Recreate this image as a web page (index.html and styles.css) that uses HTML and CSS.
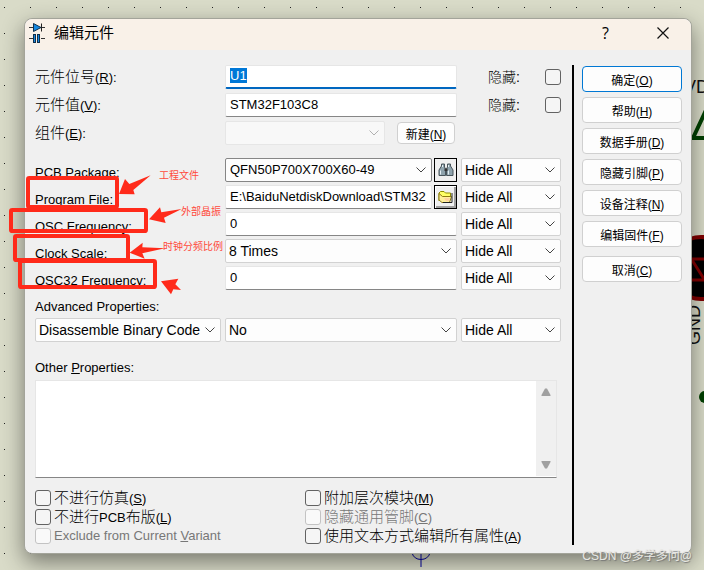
FILE: index.html
```html
<!DOCTYPE html>
<html lang="zh-CN">
<head>
    <meta charset="UTF-8">
    <meta name="viewport" content="width=device-width, initial-scale=1.0">
    <title>编辑元件</title>
    <link rel="stylesheet" href="styles.css">
</head>
<body>
    <!-- schematic parts that stick out behind the dialog -->
    <svg class="schematic schematic-right" viewBox="0 0 24 420" aria-hidden="true">
        <text x="4" y="93" class="net-name">VD</text>
        <path d="M13 138L28 106M12 138H28" fill="none" stroke="#004000" stroke-width="4"/>
        <circle cx="21" cy="268" r="31" fill="#000" stroke="#800000" stroke-width="4"/>
        <path d="M0 259H24M0 280H24M12 260L24 279" stroke="#800000" stroke-width="3"/>
        <text class="net-name" transform="translate(20 345) rotate(-90)">GND</text>
        <circle cx="25" cy="397" r="6" fill="#004000"/>
    </svg>
    <svg class="schematic schematic-bottom" viewBox="0 0 24 24" aria-hidden="true">
        <path d="M12 0V24M3 10A9.500 9.500 0 0 0 21 10" fill="none" stroke="#0000a0" stroke-width="1"/>
    </svg>

    <div class="dialog" role="dialog" aria-labelledby="dialogTitle">
        <div class="titlebar">
            <svg class="app-icon" width="16" height="22" viewBox="0 0 16 22" aria-hidden="true">
                <path d="M0 5.500H16M0 16.500H4M12 16.500H16" stroke="#333" stroke-width="1"/>
                <path d="M4.500 1.500L12 5.500L4.500 9.500Z" fill="#1688e0" stroke="#12304a"/>
                <path d="M12.500 1.500V9.500" stroke="#222" stroke-width="1"/>
                <rect x="4.500" y="12.500" width="2" height="8" fill="#1688e0" stroke="#12304a"/>
                <rect x="8.500" y="12.500" width="2" height="8" fill="#1688e0" stroke="#12304a"/>
            </svg>
            <h1 id="dialogTitle">编辑元件</h1>
            <button type="button" class="title-btn" aria-label="Help">?</button>
            <button type="button" class="title-btn" aria-label="Close">
                <svg width="12" height="12" viewBox="0 0 12 12"><path d="M0.500 0.500L11.500 11.500M11.500 0.500L0.500 11.500" stroke="#111" stroke-width="1.200"/></svg>
            </button>
        </div>

        <form class="dialog-body">
            <div class="main">
                <div class="part-rows">
                    <label class="cn" for="partRef">元件位号<span class="key">(<u>R</u>):</span></label>
                    <input type="text" id="partRef" class="field focused" value="U1">
                    <label class="cn hide-label" for="hideRef">隐藏:</label>
                    <input type="checkbox" id="hideRef">

                    <label class="cn" for="partValue">元件值<span class="key">(<u>V</u>):</span></label>
                    <input type="text" id="partValue" class="field" value="STM32F103C8">
                    <label class="cn hide-label" for="hideValue">隐藏:</label>
                    <input type="checkbox" id="hideValue">

                    <label class="cn" for="element">组件<span class="key">(<u>E</u>):</span></label>
                    <div class="element-group">
                        <select id="element" class="field" disabled><option></option></select>
                        <button type="button" class="btn">新建(<u>N</u>)</button>
                    </div>
                </div>

                <div class="props">
                    <label for="pcbPackage">PCB Package:</label>
                    <div class="with-tool">
                        <select id="pcbPackage" class="field combo"><option>QFN50P700X700X60-49</option></select>
                        <button type="button" class="tool-btn" aria-label="Browse packages">
                            <svg width="16" height="14" viewBox="0 0 16 14">
                                <path d="M3.500 1H6.500V4L7.500 6V12.500H1V7L3.500 3ZM9.500 1H12.500V3L15 7V12.500H8.500V6L9.500 4Z" fill="#8fa3ad" stroke="#48545b"/>
                                <path d="M2.500 7.500V11.500M10.500 7.500V11.500M4.500 2V4M10.500 2V4" stroke="#e6f0f4"/>
                                <path d="M6.500 5.500H9.500V8H6.500Z" fill="#333"/>
                            </svg>
                        </button>
                    </div>
                    <select class="field" aria-label="PCB Package visibility"><option>Hide All</option></select>

                    <label for="programFile">Program File:</label>
                    <div class="with-tool">
                        <input type="text" id="programFile" class="field" value="E:\BaiduNetdiskDownload\STM32">
                        <button type="button" class="tool-btn raised" aria-label="Open file">
                            <svg width="16" height="14" viewBox="0 0 16 14">
                                <path d="M1 11V3L2.500 1.500H6L7.500 3H12.500V6" fill="#ffff66" stroke="#8c8c00"/>
                                <path d="M1 3.500L4.500 6.500H13.500L11.500 12.500H4L1 10Z" fill="#ffef9a" stroke="#8c7a10"/>
                                <path d="M6 8H12L11 11H8Z" fill="#ffd0a0"/>
                                <path d="M14 3V12.500H5" fill="none" stroke="#222"/>
                            </svg>
                        </button>
                    </div>
                    <select class="field" aria-label="Program File visibility"><option>Hide All</option></select>

                    <label for="oscFreq">OSC Frequency:</label>
                    <input type="text" id="oscFreq" class="field" value="0">
                    <select class="field" aria-label="OSC Frequency visibility"><option>Hide All</option></select>

                    <label for="clockScale">Clock Scale:</label>
                    <select id="clockScale" class="field"><option>8 Times</option></select>
                    <select class="field" aria-label="Clock Scale visibility"><option>Hide All</option></select>

                    <label for="osc32Freq">OSC32 Frequency:</label>
                    <input type="text" id="osc32Freq" class="field" value="0">
                    <select class="field" aria-label="OSC32 Frequency visibility"><option>Hide All</option></select>
                </div>

                <label class="section-label" for="advName">Advanced Properties:</label>
                <div class="props">
                    <select id="advName" class="field"><option>Disassemble Binary Code</option></select>
                    <select class="field" aria-label="Advanced property value"><option>No</option></select>
                    <select class="field" aria-label="Advanced property visibility"><option>Hide All</option></select>
                </div>

                <label class="section-label other-label" for="otherProps">Other <u>P</u>roperties:</label>
                <div class="other-box">
                    <textarea id="otherProps"></textarea>
                    <div class="scroll-track" aria-hidden="true">
                        <svg width="10" height="8" viewBox="0 0 10 8"><path d="M4 0.500H6L9.500 7V8H0.500V7Z" fill="#a0a0a0"/></svg>
                        <svg width="10" height="8" viewBox="0 0 10 8"><path d="M4 7.500H6L9.500 1V0H0.500V1Z" fill="#a0a0a0"/></svg>
                    </div>
                </div>

                <div class="checks">
                    <label class="cn"><input type="checkbox"><span>不进行仿真<span class="key">(<u>S</u>)</span></span></label>
                    <label class="cn"><input type="checkbox"><span>附加层次模块<span class="key">(<u>M</u>)</span></span></label>
                    <label class="cn"><input type="checkbox"><span>不进行<span class="key">PCB</span>布版<span class="key">(<u>L</u>)</span></span></label>
                    <label class="cn disabled"><input type="checkbox" disabled><span>隐藏通用管脚<span class="key">(<u>C</u>)</span></span></label>
                    <label class="disabled"><input type="checkbox" disabled><span>Exclude from Current <u>V</u>ariant</span></label>
                    <label class="cn"><input type="checkbox"><span>使用文本方式编辑所有属性<span class="key">(<u>A</u>)</span></span></label>
                </div>
            </div>

            <div class="actions">
                <button type="submit" class="btn btn-default">确定(<u>O</u>)</button>
                <button type="button" class="btn">帮助(<u>H</u>)</button>
                <button type="button" class="btn">数据手册(<u>D</u>)</button>
                <button type="button" class="btn">隐藏引脚(<u>P</u>)</button>
                <button type="button" class="btn">设备注释(<u>N</u>)</button>
                <button type="button" class="btn">编辑固件(<u>F</u>)</button>
                <button type="button" class="btn btn-cancel">取消(<u>C</u>)</button>
            </div>
        </form>
    </div>

    <!-- red callouts -->
    <svg class="marks" viewBox="0 0 720 450" aria-hidden="true">
        <g fill="none" stroke="#ff2a1a" stroke-width="12">
            <rect x="84" y="84" width="267" height="87" rx="4"/>
            <rect x="33" y="180" width="405" height="63" rx="4"/>
            <rect x="45" y="258" width="339" height="72" rx="4"/>
            <rect x="60" y="333" width="405" height="78" rx="4"/>
        </g>
        <g fill="#ff2a1a">
            <path d="M357 132L375 87L388 102L452 76L400 120L404 133Z"/>
            <path d="M447 208L480 172L484 187L545 177L492 203L497 219Z"/>
            <path d="M389 308L428 278L427 292L495 295L427 310L434 326Z"/>
            <path d="M483 394L535 386L526 403L543 420L520 418L513 433Z"/>
        </g>
    </svg>
    <span class="note note-file">工程文件</span>
    <span class="note note-osc">外部晶振</span>
    <span class="note note-scale">时钟分频比例</span>

    <span class="watermark">CSDN @多学多问@</span>

    <script>
        const partRef = document.getElementById('partRef');
        partRef.focus();
        partRef.select();
    </script>
</body>
</html>
```

FILE: styles.css
```css
* {
    margin: 0;
    padding: 0;
    box-sizing: border-box;
}

body {
    position: relative;
    min-height: 100vh;
    padding: 18px 12px 15px 24px;
    overflow: hidden;
    font-family: "Liberation Sans", "Noto Sans CJK SC", sans-serif;
    font-size: 13px;
    color: #000;
    background-color: #d9dbc8;
    background-image: conic-gradient(from 270deg at 1px 1px, #222 90deg, transparent 0);
    background-size: 26px 26px;
    background-position: 4px 7px;
}

/* schematic behind the dialog */
.schematic {
    position: absolute;
}

.schematic-right {
    top: 0;
    right: 0;
    width: 24px;
    height: 420px;
}

.schematic-bottom {
    left: 409px;
    bottom: 3px;
    width: 24px;
    height: 24px;
}

.net-name {
    font-size: 18px;
    fill: #111;
}

/* dialog */
.dialog {
    position: relative;
    border: 1px solid #a3a49a;
    border-radius: 8px;
    background: #f0f0f0;
    box-shadow: 0 8px 22px rgba(0, 0, 0, 0.45);
}

.titlebar {
    display: flex;
    align-items: center;
    height: 31px;
    padding: 0 0 3px 4px;
    border-radius: 8px 8px 0 0;
    background: #f9f1e8;
}

.titlebar h1 {
    flex: 1;
    margin-left: 9px;
    font-size: 15px;
    font-weight: 400;
    line-height: 20px;
}

.title-btn {
    width: 57px;
    height: 28px;
    border: none;
    background: none;
    font-family: "Open Sans", sans-serif;
    font-size: 16px;
}

.dialog-body {
    display: flex;
    padding: 15px 9px 8px 10px;
}

.main {
    flex: 1;
    min-width: 0;
    margin-right: 11px;
}

.cn {
    font-size: 15px;
    font-weight: 300;
    line-height: 19px;
}

.key {
    font-size: 13px;
    font-weight: 400;
}

/* fields */
.field {
    width: 100%;
    min-width: 0;
    height: 24px;
    padding: 0 4px 2px;
    border: 1px solid #e6e6e6;
    border-bottom-color: #868686;
    border-radius: 2px;
    outline: none;
    background-color: #fff;
    font-family: inherit;
    font-size: 13px;
    color: #000;
}

select.field {
    appearance: none;
    border-color: #d2d2d2;
    background-color: #fdfdfd;
    background-image: url("data:image/svg+xml,%3Csvg xmlns='http://www.w3.org/2000/svg' width='10' height='6'%3E%3Cpath d='M.5.5L5 5L9.500.5' fill='none' stroke='%23444'/%3E%3C/svg%3E");
    background-repeat: no-repeat;
    background-position: right 5px center;
    padding: 0 3px;
    font-size: 14px;
}

select.combo {
    border-color: #868686;
    padding: 0 4px 2px;
    font-size: 13px;
}

select.field:disabled {
    border-color: #e6e6e6;
    background-color: #f8f8f8;
    background-image: url("data:image/svg+xml,%3Csvg xmlns='http://www.w3.org/2000/svg' width='10' height='6'%3E%3Cpath d='M.5.5L5 5L9.500.5' fill='none' stroke='%23b0b0b0'/%3E%3C/svg%3E");
    opacity: 1;
}

.field.focused {
    border-bottom: 2px solid #0067c0;
}

.field::selection {
    background: #0078d7;
    color: #fff;
}

input[type="checkbox"] {
    appearance: none;
    flex: none;
    width: 16px;
    height: 16px;
    border: 1px solid #626262;
    border-radius: 3px;
    background: #f5f5f5;
}

input[type="checkbox"]:disabled {
    border-color: #c3c3c3;
    background: #f9f9f9;
}

.part-rows {
    display: grid;
    grid-template-columns: 186px 1fr 80px 16px;
    column-gap: 4px;
    row-gap: 4px;
    align-items: center;
}

.hide-label {
    padding-left: 27px;
    font-size: 14px;
}

.element-group {
    display: flex;
    align-items: center;
    gap: 12px;
}

.element-group .btn {
    flex: none;
    width: 58px;
    height: 22px;
    margin-right: 2px;
}

.props {
    display: grid;
    grid-template-columns: 186px 1fr 100px;
    column-gap: 4px;
    row-gap: 3px;
}

.part-rows + .props {
    margin-top: 13px;
}

.props label {
    height: 22px;
    padding-top: 7px;
    overflow: hidden;
    line-height: 16px;
}

.with-tool {
    display: flex;
    gap: 2px;
}

.tool-btn {
    display: flex;
    flex: none;
    align-items: center;
    justify-content: center;
    width: 23px;
    height: 24px;
    border: 1px solid #000;
    background: #f0f0f0;
}

.tool-btn.raised {
    box-shadow: inset 1px 1px #fff, inset -2px -2px #a0a0a0;
}

.section-label {
    display: block;
    padding-top: 6px;
    line-height: 22px;
}

.other-label {
    padding: 15px 0 1px;
}

.other-box {
    display: flex;
    height: 98px;
    margin-right: 4px;
    border: 1px solid #e6e6e6;
    border-bottom-color: #868686;
    background: #fff;
}

.other-box textarea {
    flex: 1;
    border: none;
    outline: none;
    resize: none;
    font-family: inherit;
    font-size: 13px;
}

.scroll-track {
    display: flex;
    flex-direction: column;
    align-items: center;
    justify-content: space-between;
    width: 20px;
    margin-bottom: 1px;
    padding: 7px 0;
    background: #f0f0f0;
}

.checks {
    display: grid;
    grid-template-columns: 270px 1fr;
    margin-top: 10px;
}

.checks label {
    display: flex;
    align-items: center;
    height: 19px;
    white-space: nowrap;
}

.checks input {
    margin-right: 3px;
}

.disabled {
    color: #777;
}

/* right column */
.actions {
    display: flex;
    flex-direction: column;
    gap: 5px;
    padding: 1px 0 0 8px;
    border-left: 2px solid #000;
}

.btn {
    width: 100px;
    height: 26px;
    border: 1px solid #d0d0d0;
    border-radius: 4px;
    background: #fdfdfd;
    font-family: inherit;
    font-size: 12px;
    color: #000;
}

.btn-default {
    border-color: #0078d4;
}

.btn-cancel {
    margin-top: 4px;
}

/* callouts laid over the dialog */
.marks {
    position: absolute;
    left: 0;
    top: 150px;
    width: 240px;
    height: 150px;
    pointer-events: none;
}

.note {
    position: absolute;
    font-size: 10px;
    line-height: 12px;
    color: #ff4a3c;
    white-space: nowrap;
}

.note-file {
    left: 159px;
    top: 170px;
}

.note-osc {
    left: 181px;
    top: 206px;
}

.note-scale {
    left: 163px;
    top: 241px;
}

.watermark {
    position: absolute;
    right: 12px;
    bottom: 6px;
    font-size: 12px;
    line-height: 16px;
    color: #e8e8e4;
    text-shadow: 1px 1px 1px #777;
}
```
